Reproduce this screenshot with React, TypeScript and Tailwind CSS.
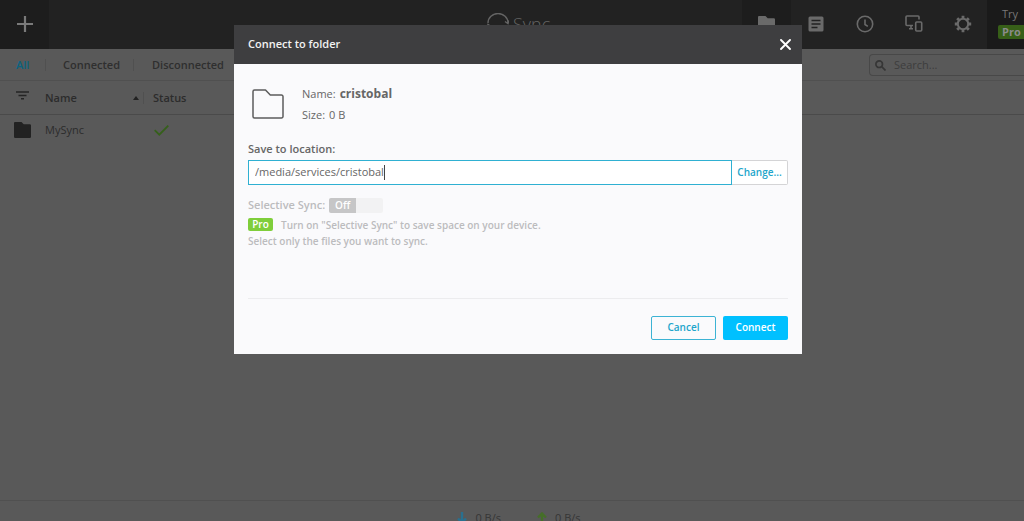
import { useState } from "react";

function FolderSolid({ className }: { className: string }) {
  return (
    <svg viewBox="0 0 17 16" className={className} fill="currentColor" aria-hidden="true">
      <path d="M1.3 0h6.2l2.2 2.3h6.1a1.2 1.2 0 0 1 1.2 1.2v11.3a1.2 1.2 0 0 1-1.2 1.2H1.2A1.2 1.2 0 0 1 0 14.800V1.200A1.200 1.200 0 0 1 1.300 0z" />
    </svg>
  );
}

function Toolbar() {
  const item = "flex h-full w-[49px] shrink-0 items-center justify-center pb-0.5 text-[#6a6a6a]";
  return (
    <header className="grid h-[49px] shrink-0 grid-cols-[1fr_78px_1fr] overflow-hidden bg-[#222222]">
      <div className="flex">
        <button aria-label="Add" className="flex w-[49px] items-center justify-center bg-[#1d1d1d] pb-0.5 text-[#7a7a7a]">
          <svg viewBox="0 0 16 16" className="size-4" stroke="currentColor" strokeWidth="2.2" aria-hidden="true">
            <path d="M8 0v16M0 8h16" />
          </svg>
        </button>
      </div>
      <div className="flex items-center gap-1 pb-0.5 pl-3.5 text-[#646464]">
        <svg viewBox="0 0 22 22" className="size-[22px] shrink-0" fill="none" stroke="currentColor" strokeWidth="1.4" aria-hidden="true">
          <path d="M1 10a10 9.500 0 0 1 20 0M21 12a10 9.500 0 0 1-20 0M18 8.500l3 2.200 1-3.200M4 13.500l-3-2.200-1 3.200" />
        </svg>
        <span className="text-lg font-light">Sync</span>
      </div>
      <nav className="flex justify-end">
        <button aria-label="Folders" className={`${item} bg-[#1d1d1d]`}>
          <FolderSolid className="h-4 w-[17px]" />
        </button>
        <button aria-label="Log" className={item}>
          <svg viewBox="0 0 16 16" className="size-4" aria-hidden="true">
            <rect x="0.500" y="0.500" width="15" height="15" rx="1.500" fill="currentColor" />
            <path d="M3.500 4.500h9M3.500 8h9M3.500 11.500h6" stroke="#222222" strokeWidth="1.500" />
          </svg>
        </button>
        <button aria-label="History" className={item}>
          <svg viewBox="0 0 18 18" className="size-[18px]" fill="none" stroke="currentColor" strokeWidth="1.600" aria-hidden="true">
            <circle cx="9" cy="9" r="7.700" />
            <path d="M9 4.500v5l2.800 1.800" />
          </svg>
        </button>
        <button aria-label="Devices" className={item}>
          <svg viewBox="0 0 18 17" className="h-[17px] w-[18px]" fill="none" stroke="currentColor" strokeWidth="1.600" aria-hidden="true">
            <path d="M14 4.500V2a1 1 0 0 0-1-1H2a1 1 0 0 0-1 1v7.500a1 1 0 0 0 1 1h6M6 10.500v3M4 13.800h4" />
            <rect x="10.700" y="7" width="6" height="9" rx="1" />
          </svg>
        </button>
        <button aria-label="Settings" className={item}>
          <svg viewBox="0 0 18 18" className="size-[18px]" fill="none" stroke="currentColor" aria-hidden="true">
            <circle cx="9" cy="9" r="5.200" strokeWidth="2" />
            <path
              strokeWidth="2.800"
              d="M9 0.800v2.500M9 14.700v2.500M0.800 9h2.500M14.700 9h2.500M3.200 3.200l1.800 1.800M13 13l1.800 1.800M3.200 14.800l1.800-1.800M13 5l1.800-1.800"
            />
          </svg>
        </button>
        <a href="#pro" className="flex w-[37px] shrink-0 flex-col bg-[#1a1a1a] pt-1.5 pl-[11px] text-[11px] leading-4 text-[#777777]">
          <span className="pl-1">Try</span>
          <span className="mt-[3px] w-8 rounded-xs bg-[#375f18] pl-1 leading-[14px] font-bold text-[#8a8a8a]">Pro</span>
        </a>
      </nav>
    </header>
  );
}

function Filters() {
  return (
    <div className="flex h-8 shrink-0 items-center justify-between overflow-hidden border-b border-[#505050] pt-px text-[11px] font-semibold text-[#2f2f2f]">
      <div className="flex items-center">
        <button className="w-[45px] pl-4 text-left leading-3 text-[#0a6480]">All</button>
        <button className="w-[88px] border-l border-[#505050] pl-[17px] text-left leading-3">Connected</button>
        <button className="border-l border-[#505050] pl-[18px] text-left leading-3">Disconnected</button>
      </div>
      <label className="flex h-[22px] w-[155px] items-center gap-2 rounded-l-sm border border-r-0 border-[#484848] pl-[5px]">
        <svg viewBox="0 0 11 11" className="size-[11px] shrink-0" fill="none" stroke="#363636" strokeWidth="1.700" aria-hidden="true">
          <circle cx="4.200" cy="4.200" r="3.300" />
          <path d="M6.700 6.700l3.800 3.800" />
        </svg>
        <input aria-label="Search" placeholder="Search..." className="min-w-0 flex-1 bg-transparent font-normal outline-none placeholder:text-[#3d3d3d]" />
      </label>
    </div>
  );
}

function FolderTable() {
  return (
    <table className="w-full table-fixed text-left text-[11px] text-[#2c2c2c]">
      <thead>
        <tr className="h-[33px] border-b border-[#4a4a4a]">
          <th className="w-[45px] pl-4">
            <svg viewBox="0 0 13 9" className="mb-1 h-[9px] w-[13px]" stroke="#242424" strokeWidth="1.500" aria-label="Filter">
              <path d="M0 1h13M2.500 4.500h8M5 7.700h3" />
            </svg>
          </th>
          <th className="w-[99px] pt-px font-semibold">
            <div className="flex items-center justify-between border-r border-[#505050] pr-1 leading-3">
              Name
              <svg viewBox="0 0 6 4" className="h-1 w-1.5" fill="#222222" aria-hidden="true">
                <path d="M3 0l3 4H0z" />
              </svg>
            </div>
          </th>
          <th className="pt-px pl-[9px] font-semibold">Status</th>
        </tr>
      </thead>
      <tbody>
        <tr className="h-8">
          <td className="pl-3.5">
            <FolderSolid className="h-4 w-[17px] text-[#222222]" />
          </td>
          <td>MySync</td>
          <td className="pl-2.5">
            <svg viewBox="0 0 15 11" className="h-[11px] w-[15px]" fill="none" stroke="#35601a" strokeWidth="1.800" aria-label="Synced">
              <path d="M0.700 5.200l4.600 4.500 9-9" />
            </svg>
          </td>
        </tr>
      </tbody>
    </table>
  );
}

function Speed({ up }: { up?: boolean }) {
  return (
    <span className="flex items-center gap-2">
      <svg viewBox="0 0 10 12" className="h-3 w-2.5" fill="none" stroke={up ? "#456e28" : "#29708f"} strokeWidth="2.400" aria-hidden="true">
        <path d={up ? "M5 12V1.500M1 5.500l4-4 4 4" : "M5 0v10.500M1 6.500l4 4 4-4"} />
      </svg>
      0 B/s
    </span>
  );
}

function ConnectDialog() {
  const [path, setPath] = useState("/media/services/cristobal");
  return (
    <div className="fixed inset-0 flex items-start justify-center pt-[25px] pl-3">
      <section role="dialog" aria-labelledby="dialog-title" className="w-[568px] bg-[#fafafc] text-[11px] text-[#666666]">
        <div className="flex h-[39px] items-center justify-between bg-[#3e3e40] pr-[11px] pl-3.5 text-[#f2f2f2]">
          <h1 id="dialog-title" className="font-semibold">Connect to folder</h1>
          <button aria-label="Close">
            <svg viewBox="0 0 11 11" className="size-[11px]" stroke="white" strokeWidth="1.900" strokeLinecap="round" aria-hidden="true">
              <path d="M1 1l9 9M10 1l-9 9" />
            </svg>
          </button>
        </div>
        <div className="px-3.5 pt-[19px] pb-3.5">
          <div className="flex items-center gap-[18px] pl-1">
            <svg viewBox="0 0 32 30" className="h-[30px] w-8" fill="none" stroke="#5c5c5c" strokeWidth="1.500" strokeLinejoin="round" aria-hidden="true">
              <path d="M2.500 1H13.500l4.800 5H29.500a1.500 1.500 0 0 1 1.500 1.500V27.500a1.500 1.500 0 0 1-1.500 1.500H2.500A1.500 1.500 0 0 1 1 27.500V2.500A1.500 1.500 0 0 1 2.500 1z" />
            </svg>
            <dl className="leading-[21px]">
              <div className="flex items-baseline gap-1">
                <dt>Name:</dt>
                <dd className="text-xs font-bold">cristobal</dd>
              </div>
              <div className="flex items-baseline gap-1">
                <dt>Size:</dt>
                <dd>0 B</dd>
              </div>
            </dl>
          </div>
          <label htmlFor="location" className="mt-4 block leading-4 font-semibold">
            Save to location:
          </label>
          <div className="mt-[3px] flex h-[25px]">
            <div className="flex min-w-0 flex-1 items-center border border-[#2fb0d2] bg-white pl-1.5">
              <input
                id="location"
                value={path}
                onChange={(e) => setPath(e.target.value)}
                className="field-sizing-content bg-transparent outline-none"
              />
              <span className="h-[15px] w-px bg-[#444444]" />
            </div>
            <button className="w-14 rounded-r-xs border border-l-0 border-[#d4d4d6] bg-white text-[10px] font-semibold text-[#21a5cb]">
              Change...
            </button>
          </div>
          <div className="mt-3 flex items-center gap-1 text-[#bcbcbe]">
            <span id="selective" className="font-semibold">Selective Sync:</span>
            <button
              role="switch"
              aria-checked="false"
              aria-labelledby="selective"
              disabled
              className="flex h-[15px] w-[54px] rounded-xs bg-[#f2f2f3] text-[10px] leading-[15px] font-semibold text-white"
            >
              <span className="w-[27px] rounded-l-xs bg-[#c6c6c7]">Off</span>
            </button>
          </div>
          <div className="mt-[3px] text-[10px] leading-4 font-semibold text-[#bcbcbe]">
            <p className="flex items-center gap-2">
              <span className="w-[25px] rounded-xs bg-[#7fce3b] text-center leading-[13px] text-white">Pro</span>
              Turn on "Selective Sync" to save space on your device.
            </p>
            <p>Select only the files you want to sync.</p>
          </div>
          <div className="mt-[49px] flex justify-end gap-[7px] border-t border-[#ececee] pt-[17px] text-[10px] font-semibold">
            <button className="h-6 w-[65px] rounded-xs border border-[#3cb3d4] text-[#21a5cb]">Cancel</button>
            <button className="h-6 w-[65px] rounded-xs bg-[#00c0ff] text-white">Connect</button>
          </div>
        </div>
      </section>
    </div>
  );
}

export default function App() {
  return (
    <div className="flex h-screen flex-col overflow-hidden bg-[#595959] font-['Open_Sans','Noto_Sans',sans-serif]">
      <Toolbar />
      <Filters />
      <main className="min-h-0 flex-1">
        <FolderTable />
      </main>
      <footer className="flex h-[21px] shrink-0 justify-center overflow-hidden border-t border-[#505050] pt-[9px] pl-3.5 text-[11px] text-[#363636]">
        <div className="flex h-4 gap-9">
          <Speed />
          <Speed up />
        </div>
      </footer>
      <ConnectDialog />
    </div>
  );
}
